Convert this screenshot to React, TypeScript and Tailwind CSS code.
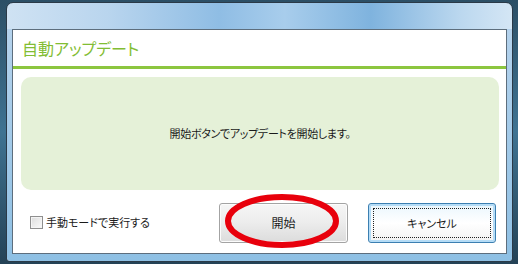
import React from 'react';

const jp = "font-['Noto_Sans_CJK_JP','Noto_Sans',sans-serif] [font-feature-settings:'palt']";

export default function App() {
  return (
    <div className="w-[518px] h-[264px] overflow-hidden bg-gradient-to-b from-[#2c4f66] via-[#3f7392] to-[#244256] pt-[2px] pl-[6px]">
      {/* Window frame */}
      <div className="relative w-[507px] h-[260px] rounded-t-[7px] rounded-b-[4px] border border-[#2b3a48] bg-[linear-gradient(90deg,#cfe2f3_0%,#b9d5ee_20%,#8fbde4_42%,#a8cdec_55%,#7fb3de_72%,#bcd8ef_90%,#d4e6f5_100%)] pt-[26px] px-[5px] pb-[7px]">
        <div className="absolute inset-x-0 top-[26px] bottom-0 rounded-b-[4px] bg-gradient-to-b from-[#b4d2ec] to-[#8ec0e4]" />

        {/* Client area */}
        <div className={`relative h-[225px] border border-[#5d6e7d] bg-white flex flex-col ${jp}`}>
          <div className="h-[36px] pl-[9px] flex items-center text-[16px] text-[#82bd33] leading-none">
            自動アップデート
          </div>
          <div className="h-[3px] bg-[#8cc63f]" />

          <div className="mt-[8px] ml-[8px] mr-[7px] h-[113px] rounded-[10px] bg-[#e5f1d8] flex items-center justify-center text-[11px] tracking-[-0.3px] text-[#1a1a1a]">
            開始ボタンでアップデートを開始します。
          </div>

          <div className="mt-[13px] flex items-start pr-[10px]">
            <label className="mt-[13px] ml-[17px] flex items-center gap-[3px] text-[11px] text-[#1a1a1a] leading-none">
              <span className="w-[13px] h-[13px] border border-[#8f8f8f] bg-gradient-to-br from-[#dcdcdc] to-[#fafafa] shadow-[inset_0_0_0_1px_#f4f4f4]" />
              手動モードで実行する
            </label>

            <div className="ml-auto flex gap-[20px]">
              <button className="w-[129px] h-[40px] rounded-[3px] border border-[#a3a3a3] bg-gradient-to-b from-[#f6f6f6] via-[#ececec] to-[#dcdcdc] shadow-[inset_0_0_0_1px_#fcfcfc] text-[12px] text-[#1a1a1a]">
                開始
              </button>
              <button className="w-[128px] h-[40px] rounded-[3px] border border-[#3c7fb1] bg-gradient-to-b from-[#eaf6fd] via-[#ffffff] to-[#f2f2f2] shadow-[inset_0_0_0_2px_#b5dcf6] p-[4px] text-[11px] text-[#1a1a1a]">
                <span className="w-full h-full flex items-center justify-center border border-dotted border-[#222]">
                  キャンセル
                </span>
              </button>
            </div>
          </div>
        </div>

        {/* Red marker ellipse */}
        <svg className="absolute left-[213px] top-[186px] pointer-events-none" width="124" height="64" viewBox="0 0 124 64">
          <ellipse cx="62" cy="32" rx="54" ry="24" fill="none" stroke="#e8000c" strokeWidth="6" />
        </svg>
      </div>
    </div>
  );
}
